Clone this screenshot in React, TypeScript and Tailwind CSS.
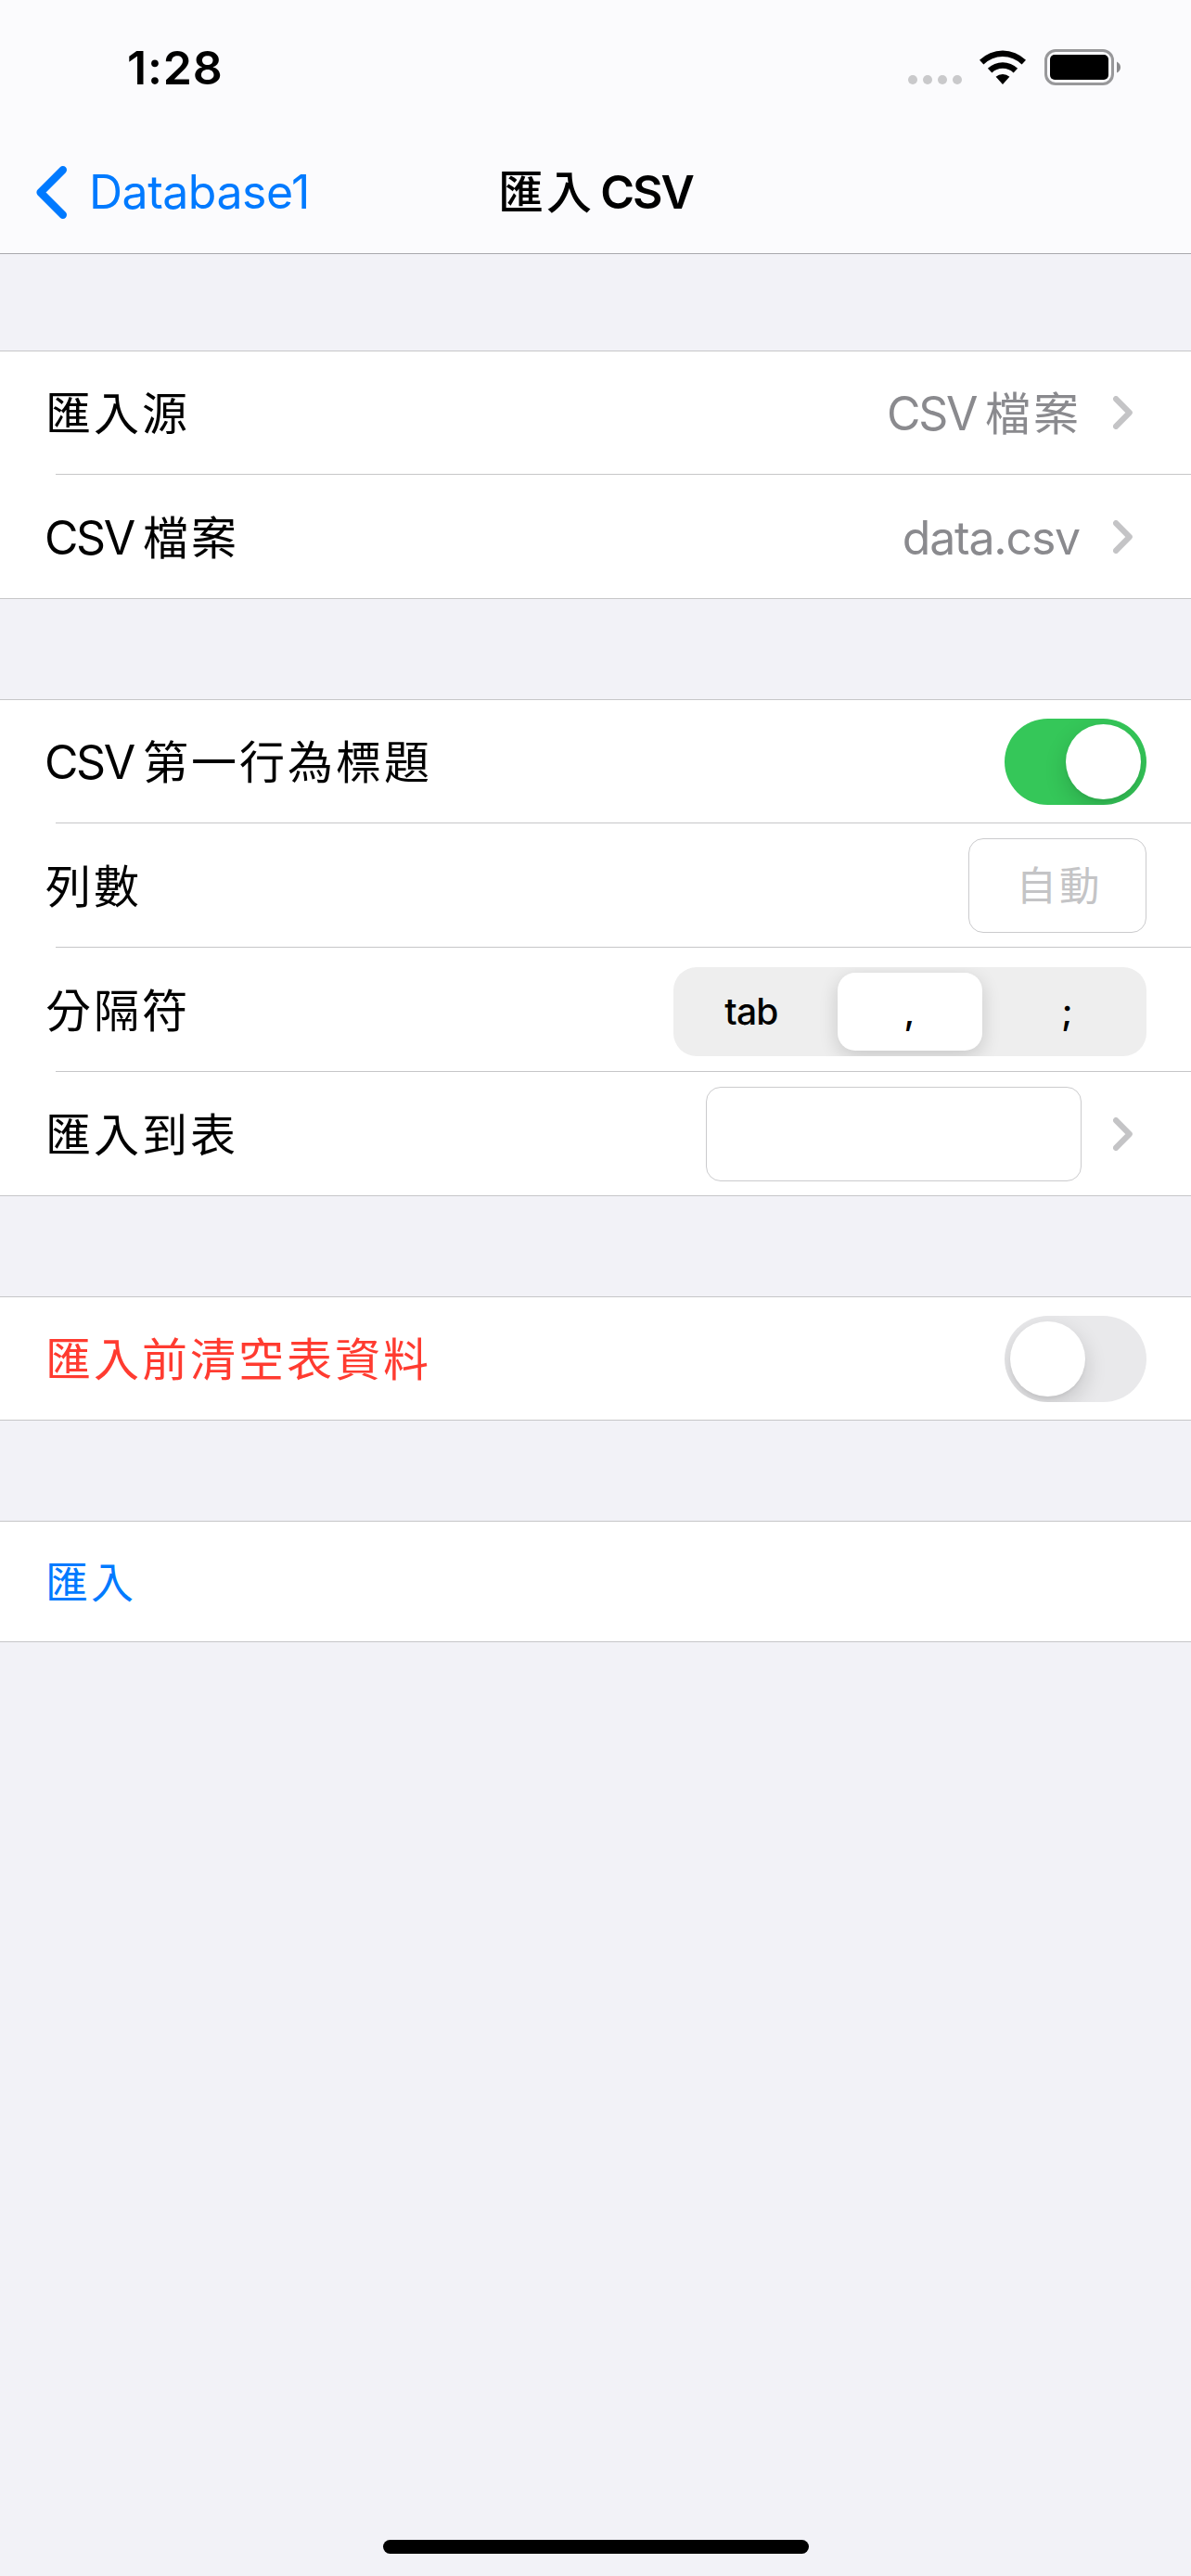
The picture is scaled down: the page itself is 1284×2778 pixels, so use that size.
import { useState } from "react";
import type { ReactNode } from "react";

// Chinese run inside a Latin line. Zero leading keeps the parent's baseline in place.
function Han({ children, className = "text-[49px]" }: { children: ReactNode; className?: string }) {
  return (
    <span className={`font-['Noto_Sans_CJK_TC',sans-serif] leading-[0] tracking-[3px] ${className}`}>{children}</span>
  );
}

function Csv() {
  return <span className="-ml-px mr-[10px] tracking-[-2.4px]">CSV</span>;
}

function Chevron() {
  return (
    <svg className="ml-[34px] mr-[15px] h-9 w-[21px] shrink-0" viewBox="0 0 21 36" fill="none">
      <path d="M3.1 3.2L17.7 18L3.1 32.8" stroke="#c4c4c6" strokeWidth="6.2" strokeLinecap="round" strokeLinejoin="round" />
    </svg>
  );
}

function Group({ children }: { children: ReactNode }) {
  return <section className="border-y border-[#c6c6c8] bg-white">{children}</section>;
}

function Divider() {
  return <div className="ml-[60px] h-px bg-[#c6c6c8]" />;
}

function Row({ label, children }: { label: ReactNode; children?: ReactNode }) {
  return (
    <div className="flex h-[133px] items-center justify-between pl-[49px] pr-12 first:h-[132px]">
      <div className="whitespace-nowrap pt-[2px]">{label}</div>
      <div className="flex items-center">{children}</div>
    </div>
  );
}

function Toggle({ on, onChange }: { on: boolean; onChange: (on: boolean) => void }) {
  return (
    <button
      role="switch"
      aria-checked={on}
      onClick={() => onChange(!on)}
      className={`mt-px flex h-[93px] w-[153px] items-center overflow-hidden rounded-full p-1.5 ${
        on ? "justify-end bg-[#35c759]" : "justify-start bg-[#e9e9eb]"
      }`}
    >
      <span className="size-[81px] rounded-full bg-white shadow-[0_9px_24px_rgba(0,0,0,0.16),0_3px_3px_rgba(0,0,0,0.04)]" />
    </button>
  );
}

function StatusBar() {
  return (
    <div className="flex h-[141px] items-start justify-between pl-[137px] pr-[76px]">
      <div className="pt-[43px] font-semibold tracking-[0.8px]">1:28</div>
      <div className="flex items-start">
        <div className="mt-[81px] flex gap-1.5">
          {[0, 1, 2, 3].map((dot) => (
            <span key={dot} className="size-2.5 rounded-full bg-[#c9c9cb]" />
          ))}
        </div>
        <svg className="ml-[19px] mt-[54px] h-[37px] w-[50px]" viewBox="0 0 50 37">
          <path d="M0 10.8A35.5 35.5 0 0 1 50 10.8L45.6 15.5A29.5 29.5 0 0 0 4.4 15.5Z" />
          <path d="M8.9 19.8A23 23 0 0 1 41.1 19.8L36.6 24.4A17 17 0 0 0 13.4 24.4Z" />
          <path d="M17.6 28.8A11 11 0 0 1 32.4 28.8L25 37Z" />
        </svg>
        <svg className="ml-5 mt-[53px] h-[39px] w-[82px]" viewBox="0 0 82 39">
          <rect x="1.5" y="1.5" width="72" height="36" rx="10.5" fill="none" stroke="#98989a" strokeWidth="3" />
          <rect x="6" y="6" width="63" height="27" rx="5" />
          <path d="M78 13.5Q82 15.5 82 19.5Q82 23.5 78 25.5Z" fill="#8a8a8c" />
        </svg>
      </div>
    </div>
  );
}

const separators = ["tab", ",", ";"];

function SegmentedControl() {
  const [selected, setSelected] = useState(",");

  return (
    <div className="mt-[5px] flex h-24 w-[510px] overflow-hidden rounded-[25px] bg-[#eeeeee]">
      {separators.map((item) => (
        <button key={item} onClick={() => setSelected(item)} className="flex w-[170px] items-center justify-center">
          <span
            className={`flex h-[84px] w-[156px] items-center justify-center pr-[2px] text-[39px] leading-[48px] font-medium tracking-[-0.8px] ${
              selected === item ? "rounded-[19px] bg-white shadow-[0_6px_20px_rgba(0,0,0,0.16)]" : ""
            }`}
          >
            {item}
          </span>
        </button>
      ))}
    </div>
  );
}

export default function App() {
  const [hasHeader, setHasHeader] = useState(true);
  const [clearTable, setClearTable] = useState(false);

  return (
    <main className="flex h-[2778px] w-[1284px] flex-col bg-[#f2f2f7] font-[Inter,'Noto_Sans_CJK_TC',sans-serif] text-[50px] leading-[60px] text-black">
      <header className="h-[274px] border-b border-[#a9a9ad] bg-[#fbfbfd]">
        <StatusBar />
        <nav className="grid h-[132px] grid-cols-[1fr_auto_1fr] items-center">
          <button className="flex items-center pl-[39px] text-[#007aff]">
            <svg className="h-[57px] w-[33px]" viewBox="0 0 33 57" fill="none">
              <path d="M28.8 4.3L4.6 28.5L28.8 52.7" stroke="currentColor" strokeWidth="8.4" strokeLinecap="round" strokeLinejoin="round" />
            </svg>
            <span className="ml-6 tracking-[-0.5px]">Database1</span>
          </button>
          <h1 className="font-semibold">
            <Han className="text-[49px] font-medium">匯入</Han>
            <span className="ml-[6px] tracking-[-2px]">CSV</span>
          </h1>
        </nav>
      </header>

      <div className="mt-[104px] flex flex-col gap-[108px]">
        <Group>
          <Row label={<Han>匯入源</Han>}>
            <span className="pt-[2px] text-[#8a8a8e]">
              <Csv />
              <Han>檔案</Han>
            </span>
            <Chevron />
          </Row>
          <Divider />
          <Row label={<><Csv /><Han>檔案</Han></>}>
            <span className="mr-[2px] pt-[2px] tracking-[-1.2px] text-[#8a8a8e]">data.csv</span>
            <Chevron />
          </Row>
        </Group>

        <Group>
          <Row label={<><Csv /><Han>第一行為標題</Han></>}>
            <Toggle on={hasHeader} onChange={setHasHeader} />
          </Row>
          <Divider />
          <Row label={<Han>列數</Han>}>
            <div className="flex h-[102px] w-48 items-center justify-center rounded-[16px] border border-[#cbcbcd] pb-[3px] pl-[4px] text-[#c4c4c6]">
              <div>
                <Han className="text-[43.5px]">自動</Han>
              </div>
            </div>
          </Row>
          <Divider />
          <Row label={<Han>分隔符</Han>}>
            <SegmentedControl />
          </Row>
          <Divider />
          <Row label={<Han>匯入到表</Han>}>
            <div className="h-[102px] w-[405px] rounded-[16px] border border-[#cbcbcd]" />
            <Chevron />
          </Row>
        </Group>

        <Group>
          <Row label={<span className="text-[#ff3b30]"><Han>匯入前清空表資料</Han></span>}>
            <Toggle on={clearTable} onChange={setClearTable} />
          </Row>
        </Group>

        <Group>
          <button className="flex h-[129px] w-full items-center pb-px pl-[49px] text-[#007aff]">
            <span>
              <Han className="text-[46px]">匯入</Han>
            </span>
          </button>
        </Group>
      </div>

      <div className="mx-auto mb-6 mt-auto h-[15px] w-[459px] rounded-full bg-black" />
    </main>
  );
}
